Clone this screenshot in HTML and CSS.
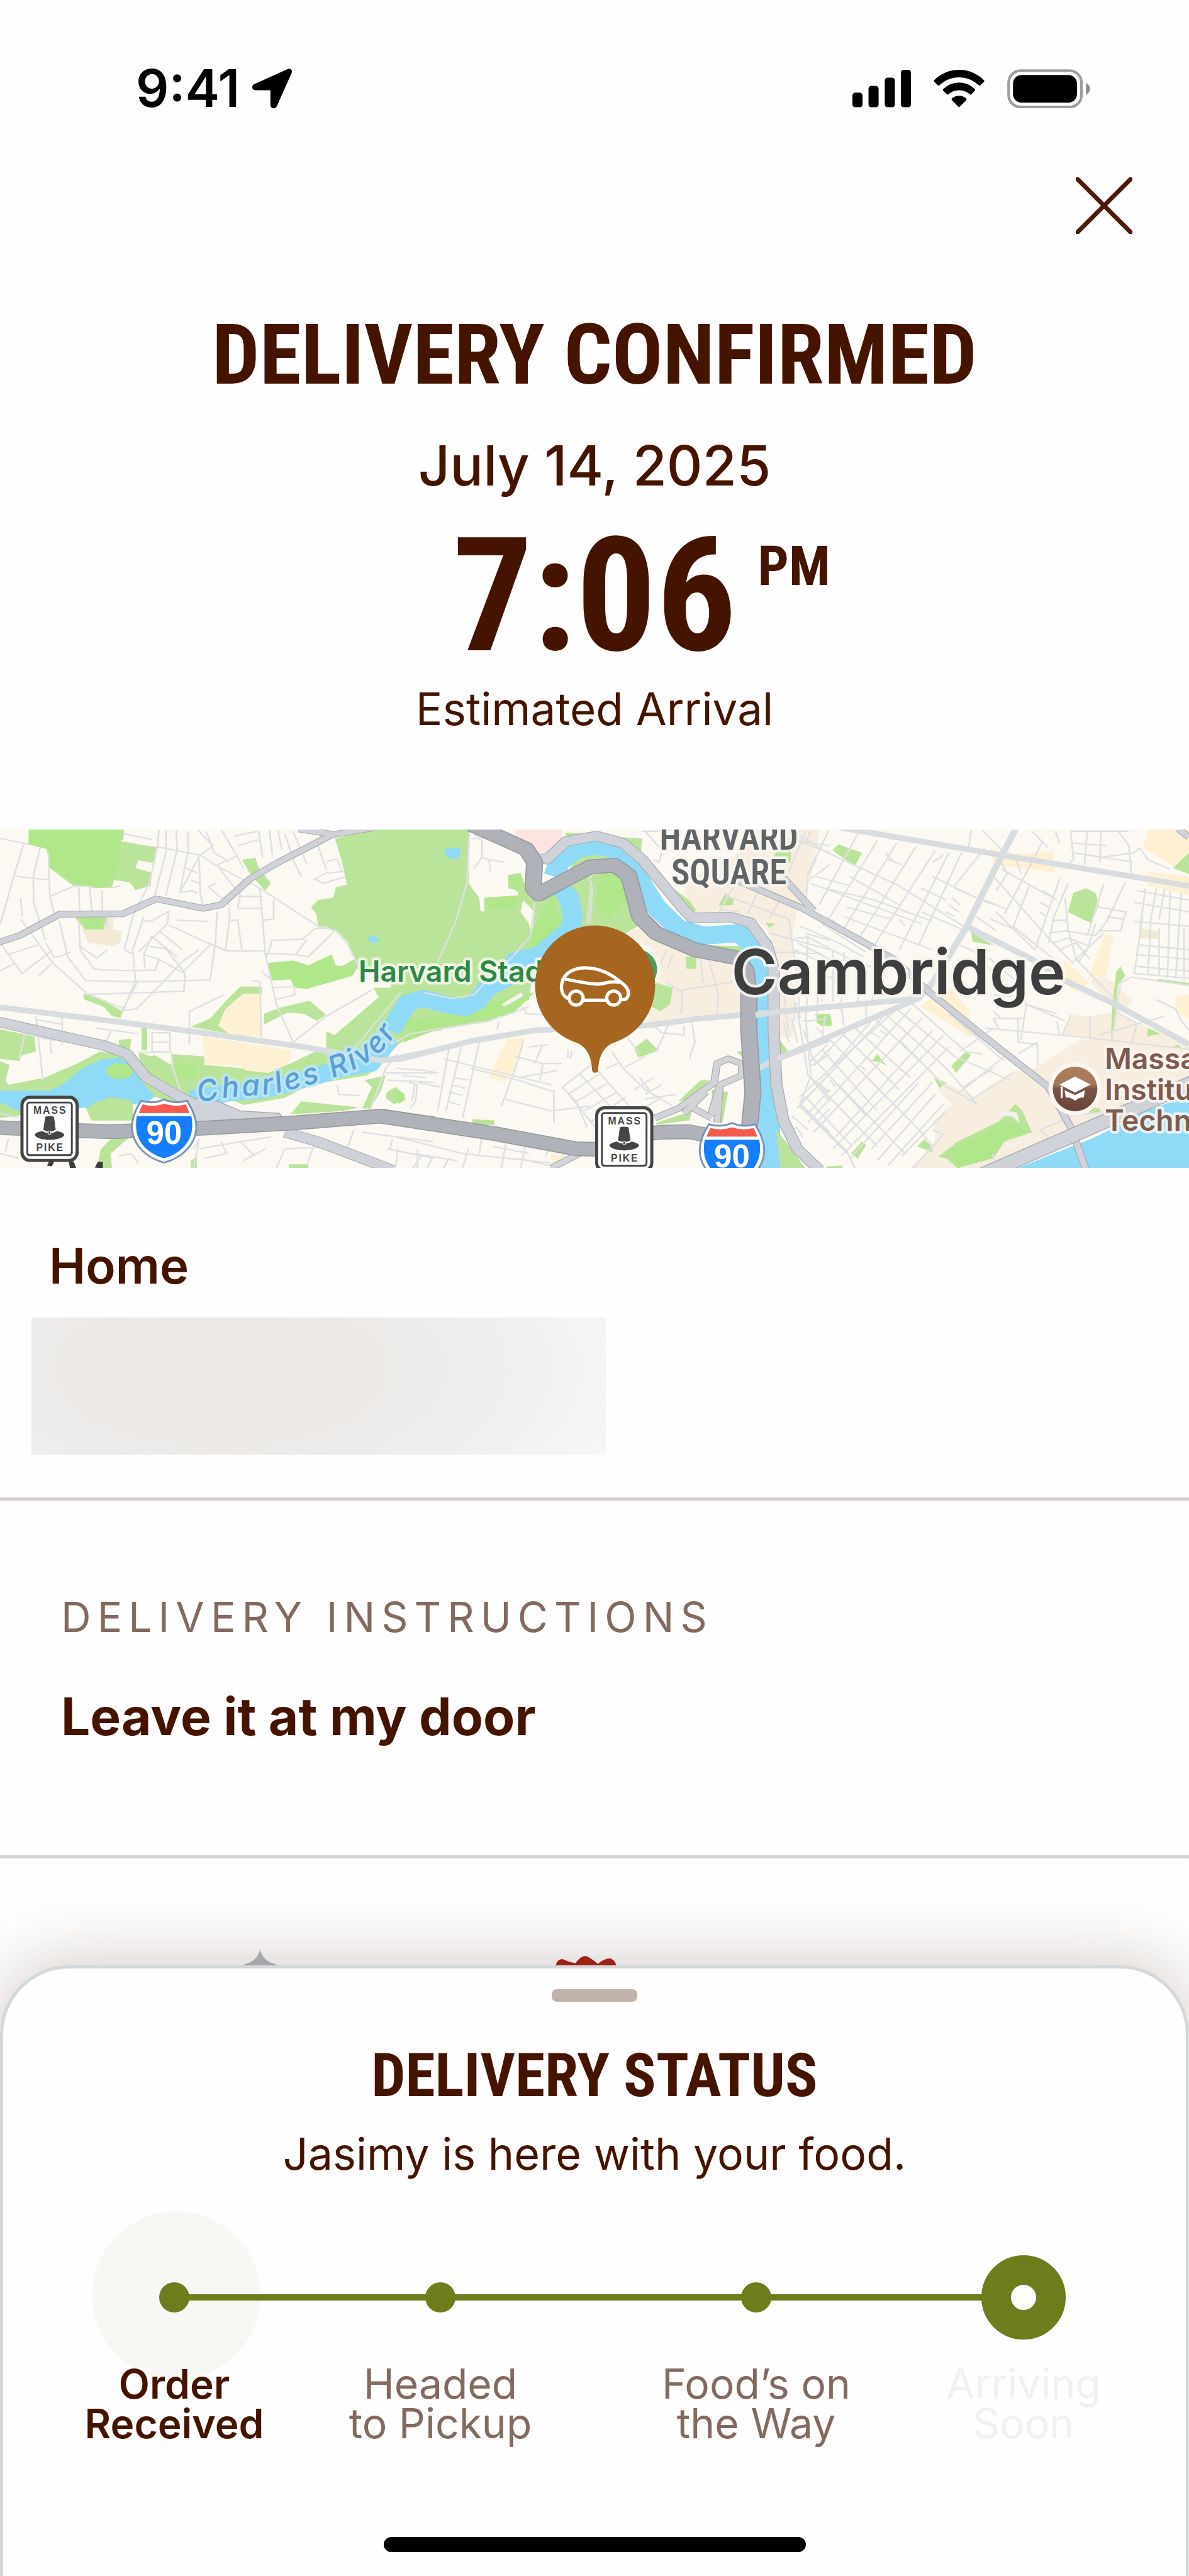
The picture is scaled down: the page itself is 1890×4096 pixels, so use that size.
FILE: index.html
```html
<!DOCTYPE html>
<html lang="en">
<head>
<meta charset="utf-8">
<meta name="viewport" content="width=device-width, initial-scale=1">
<title>Delivery Confirmed</title>
<link rel="stylesheet" href="styles.css">
</head>
<body>
<div class="screen">
  <header class="status-bar">
    <div class="clock">
      <span>9:41</span>
      <svg class="icon-location" viewBox="0 0 190 192" aria-hidden="true"><path d="M170 2C182-3 194 8 189 20L118 180C112 195 87 194 87 176V104H14C-4 104-4 81 10 75Z"/></svg>
    </div>
    <div class="indicators">
      <svg class="icon-signal" viewBox="0 0 284 182" aria-hidden="true"><rect y="111" width="49" height="71" rx="14"/><rect x="78" y="78" width="49" height="104" rx="14"/><rect x="157" y="38" width="49" height="144" rx="14"/><rect x="235" width="49" height="182" rx="14"/></svg>
      <svg class="icon-wifi" viewBox="0 0 246 182" aria-hidden="true"><path d="M3 50C70-17 176-17 243 50Q247 54 243 58L225 75Q221 78 217 74C163 24 83 24 29 74Q25 78 21 75L3 58Q-1 54 3 50Z"/><path d="M47 93C90 51 156 51 199 93Q203 97 199 101L183 118Q179 122 174 118C145 92 101 92 72 118Q67 122 63 118L47 101Q43 97 47 93Z"/><path d="M90 137C108 121 138 121 156 137Q162 142 157 147L127 178Q123 182 119 178L89 147Q84 142 90 137Z"/></svg>
      <svg class="icon-battery" viewBox="0 0 401 190" aria-hidden="true"><rect x="7" y="7" width="352" height="176" rx="58" fill="none" stroke="#9a9ea1" stroke-width="13"/><rect x="28" y="28" width="309" height="134" rx="42"/><path d="M380 66Q401 78 401 95T380 124Z" fill="#8c8f91"/></svg>
    </div>
  </header>

  <main>
    <section class="summary">
      <button class="close" type="button" aria-label="Close">
        <svg viewBox="0 0 90 90" aria-hidden="true"><path d="M3 3L87 87M87 3L3 87"/></svg>
      </button>
      <h1>DELIVERY CONFIRMED</h1>
      <p class="date">July 14, 2025</p>
      <p class="time">7:06<span class="period">PM</span></p>
      <p class="caption">Estimated Arrival</p>
    </section>

    <svg class="map" viewBox="0 1340 1920 547" role="img" aria-label="Map of the delivery area">
      <defs>
        <g id="pike">
          <rect width="94" height="107" rx="15" fill="#454545"/>
          <rect x="5" y="5" width="84" height="97" rx="11" fill="#fff"/>
          <rect x="11" y="11" width="72" height="85" rx="4" fill="none" stroke="#454545" stroke-width="3"/>
          <path d="M40 34Q47 32 54 34L57 55Q47 61 37 55Z" fill="#454545"/>
          <path d="M23 63C25 59 31 58 35 57Q47 64 59 57C63 58 69 59 71 63C68 74 26 74 23 63Z" fill="#454545"/>
          <rect x="45" y="57" width="4" height="5" fill="#454545" stroke="#fff"/>
          <text class="sign" x="48" y="29">MASS</text>
          <text class="sign" x="48" y="89">PIKE</text>
        </g>
        <g id="interstate">
          <path d="M16 3Q35 9 53 1Q71 9 90 3Q106 28 105 48C103 76 80 96 53 103C26 96 3 76 1 48Q0 28 16 3Z" fill="#fff" stroke="#7a93b8" stroke-width="3"/>
          <path d="M18 9Q36 14 53 8Q70 14 88 9L94 23H12Z" fill="#f6594e"/>
          <path d="M9 28H97Q99 38 98 49C96 72 76 90 53 96C30 90 10 72 8 49Q7 38 9 28Z" fill="#147efb"/>
          <text class="route" x="53" y="73">90</text>
        </g>
        <linearGradient id="campus" x1="0" y1="0" x2="0" y2="1"><stop offset="0" stop-color="#ad7f5d"/><stop offset=".4" stop-color="#a4775b"/><stop offset=".5" stop-color="#7a5446"/><stop offset="1" stop-color="#6a4338"/></linearGradient>
      </defs>
      <rect y="1340" width="1920" height="547" fill="#fbf9f2"/>

      <!-- Western tile: land cover and water -->
      <g transform="translate(0 1320) scale(.44643 .38265)">
        <path class="park" d="M104 52H450L446 96 428 100 570 128 560 195 500 182 490 215 550 235 545 290 490 308 470 275 412 265 405 298 340 300 265 290 180 215 170 135 104 115ZM875 180L925 172 932 205 980 280 958 310 905 240ZM275 420H385V475H310L275 430ZM1212 92L1345 52H1450V640H1300L1220 640 1280 600 1260 530 1215 475 1150 460 1145 410 1125 380 1150 350 1205 340 1215 295 1255 285 1235 180ZM300 745L360 765 445 820 435 848 405 840 375 800 305 770ZM0 895L125 925 130 990 80 1005 70 1030 0 1020Z"/>
        <path class="park" d="M690 885L760 850 830 760 870 715H948V745H880L815 810 790 880 830 915 880 895V925ZM955 830L1010 805 1120 775 1180 835 1145 860 1100 830 1040 825 955 875ZM430 940L475 935 470 985 430 965ZM512 885H532V985H512ZM500 990L545 1010 560 1005 620 1045V1000L740 1010V1045L870 1060 970 1080 1050 1040 1140 990 1180 1000V905L1210 920 1330 800 1370 760 1350 720 1600 720V900L1500 915 1440 960 1380 1040 1330 1090 1120 1130 1030 1185 880 1215 830 1190 700 1240 560 1180 520 1110ZM0 1030L35 1045 20 1110 30 1130 160 1100 280 1040 360 990 420 1000 480 1040 560 1180 480 1200 480 1280 330 1280 310 1225 0 1270ZM400 1360L480 1340 440 1380 400 1420 405 1482H350L365 1400ZM1320 1110L1395 1090 1380 1150 1340 1230H1310L1345 1140ZM1090 1200L1300 1225 1240 1240 1050 1255ZM1400 1160L1430 1140 1465 1170 1455 1200 1425 1212 1395 1185ZM1045 1465H1115V1482H1045ZM690 1450L712 1435V1482H690Z"/>
        <path class="grass" d="M104 52H430L440 120 420 240 380 298 280 285 180 210 170 130 104 115ZM300 425H370V470H310ZM970 615L1060 605 1115 625 1200 580 1215 625 1290 640 1275 670 1110 725 1065 720 1050 685 985 690ZM640 1040L710 1045V1100L640 1105ZM1460 880L1600 790V890L1460 950Z"/>
        <path class="shops" d="M880 745H948V930L830 915 790 880 815 810ZM733 925L1055 985 1045 1040 970 1080 890 1070 870 1050 740 1040Z"/>
        <path class="sand" d="M288 450L310 475H375L385 425H410V475L440 480 435 530 405 545 320 530Z"/>
        <path class="water" d="M0 1155H175L220 1135 300 1060 370 1022 430 1015 470 1040 510 1110 560 1180 520 1215 350 1200 320 1225 70 1240 0 1205ZM1332 505H1362V515H1380L1350 533 1332 522Z"/>
        <path class="park" d="M330 1215L400 1180 480 1200 470 1280 330 1280Z"/>
        <ellipse class="grass" cx="432" cy="1072" rx="48" ry="34"/>
        <path class="river" d="M690 1190L820 1165 960 1150 1120 1100 1240 1060 1340 1040 1400 950 1440 860 1470 800 1510 770 1580 765"/>
      </g>

      <!-- Central tile -->
      <g transform="translate(640 1320) scale(.44643 .38265)">
        <path class="park" d="M0 52H265L262 280 300 340 305 398 318 398 318 340 440 330 460 340 450 400 480 450 490 500 500 600 480 770 340 860 60 915 -20 950V700ZM405 245L450 235 470 300 620 290 640 150 760 130 830 200 870 350 890 450 830 490 480 590 500 400 440 330 440 310 405 300ZM610 65L700 70 620 100ZM810 85L890 90 885 145ZM910 240L1000 300 1095 380 1080 400 1020 390ZM1160 360L1190 322 1222 345 1215 372ZM1340 445L1370 450 1350 468ZM1100 540L1250 545V580ZM1365 150H1430V195L1395 180ZM1045 590L1085 580 1090 640 1045 640ZM1010 640L1035 650 1020 710ZM930 700L1000 720 990 790 950 820 910 810ZM1060 725L1145 735V745H1060ZM860 975L905 935 950 985 875 1015ZM1520 835H1568V885L1520 870ZM275 1275L355 1280V1300L275 1295ZM1020 1200L1100 1110 1135 1110 1100 1150 1060 1190ZM940 1290L1070 1240 1060 1280 940 1298ZM1140 1150L1200 1160 1180 1290H1150ZM1230 990L1260 985V1020ZM1370 1320L1400 1370 1450 1440 1460 1482H1388ZM1385 940L1415 990 1385 1010Z"/>
        <path class="grass" d="M0 860L250 830 340 780 500 740 420 830 60 910ZM320 340L440 335 430 385 340 390ZM405 245L450 240V325L420 300ZM560 340L600 450 540 530 480 580 490 480ZM740 240L830 240 850 330 770 430 720 380ZM0 1140L35 1190 10 1210 0 1200Z"/>
        <path class="campus-land" d="M1070 250L1230 160 1250 52H1530L1500 260 1450 400 1430 520 1435 930 1385 930 1375 600 1340 470 1270 410 1090 400 1040 320ZM830 490L890 460 1100 560 1240 590 1255 830 900 880 940 700 930 560ZM890 360L930 420 920 450Z"/>
        <path class="park" d="M1190 322L1222 345 1215 372 1165 372ZM1395 100L1430 120 1425 195 1365 165ZM910 790L940 700 1000 720 990 790 955 820ZM1045 590L1085 590V640H1050ZM1335 445L1370 450 1350 468Z"/>
        <path class="clinic" d="M430 52H598V100L540 150 500 145 430 90Z"/>
        <path class="shops" d="M400 935L465 930 420 1080 395 1115 335 1100ZM555 1420L610 1430 570 1482Z"/>
        <path class="field" d="M380 790L450 740 460 755 390 800Z"/>
        <path class="water" d="M170 140L185 132H230V160L215 180 185 170Z"/>
        <path class="river" d="M-20 900L5 850 40 785 100 765 180 790 250 805 290 780 330 720 400 680 430 605 520 580 580 520 630 470 638 420 625 340 590 290"/>
        <path class="river wide" d="M570 250L590 190 650 135 720 120 790 135 850 190 890 290 940 380 1020 470 1110 500 1240 490 1280 530 1300 620 1318 760 1322 900 1340 1060 1350 1250 1350 1500"/>
        <path class="water" d="M1310 1250L1370 1290 1380 1400 1395 1490H1310Z"/>
      </g>

      <!-- Eastern tile -->
      <g transform="translate(1220 1320) scale(.44643 .38265)">
        <path class="campus-land" d="M640 1482L560 1482 650 1370 645 1280 710 1215 660 1150 690 1120 790 1180 920 1080 1010 1060 1180 935 1290 940 1568 960V1140L1290 1270 830 1482ZM1140 835L1210 840 1300 820 1568 970 1420 960 1110 920ZM1210 690L1260 670 1320 720 1365 780 1310 830Z"/>
        <path class="shops" d="M850 125L900 155 1020 150 1075 140 1085 235 860 200ZM1425 52H1568V150L1520 210 1400 130ZM1420 230L1568 250V330L1420 290ZM1265 495L1295 500 1270 670 1200 680ZM1115 600L1210 700 1150 740 1120 690ZM600 790L700 720 770 810 780 930 600 800ZM1520 755L1568 750V850L1520 820Z"/>
        <path class="sand" d="M1395 470L1455 480V515L1388 510Z"/>
        <path class="park" d="M278 140L300 115 385 150 360 205 320 175ZM1130 400L1150 320 1195 300 1230 320 1242 370 1215 445 1190 435ZM780 485L850 530V540L785 525ZM1305 650L1320 630 1338 670 1310 710 1300 850 1285 940 1290 800ZM215 830H270L278 880H235ZM88 940L120 990 88 1005ZM420 1030L440 1000 475 1050 450 1035ZM708 1050L760 990 780 1005 725 1080ZM645 1100L690 1120 665 1145ZM345 1420L385 1370 400 1385 370 1442ZM585 1390L610 1360 640 1395V1415ZM660 1435L730 1370 880 1285 940 1210 965 1240 1000 1330 900 1370 860 1440 730 1482 690 1440ZM1420 890L1465 915 1415 925ZM1505 970L1530 960 1540 975ZM1210 1225L1245 1230V1248H1205ZM255 1475L315 1470V1482H255ZM1455 683L1568 700V712L1455 695ZM1510 215L1568 150V240ZM75 1320L110 1370 180 1482H90Z"/>
        <path class="grass" d="M220 840H270V880H235ZM705 1400L800 1350 900 1280 990 1330 900 1365 860 1440 730 1478Z"/>
        <path class="field" d="M870 1275L900 1240 945 1245 955 1290 930 1265 905 1260ZM905 1385L1010 1345 920 1395Z"/>
        <path class="water" d="M930 1490L1240 1345 1400 1245 1568 1175V1490Z"/>
      </g>

      <!-- Streets -->
      <g class="streets" transform="translate(0 1320) scale(.44643 .38265)">
        <path d="M0 90L105 115M85 115L50 250 0 455M55 250L175 265M145 130L120 250 122 360 165 520M175 150L180 330 200 430M180 335L270 290 340 295M285 290L288 400M325 300L332 405M370 310V405M400 300L435 290M445 70L550 95M575 55L570 120 540 280 480 420 450 560M565 125L725 160 775 200 940 300M600 55L600 150 560 330M638 55L640 140 600 330M680 60L680 145 650 320M715 55L770 120 720 165 650 320M745 60L775 150 830 190M800 52L860 170 880 215M850 80L930 60M860 120L935 95M935 55L950 170M975 55L985 160M1005 55L1020 140M1030 70L1065 190 1090 250M1060 60L1110 200M1150 120L1180 220M1180 190L1220 175 1235 230M1135 265L1180 235 1245 230M1140 260L1170 280 1250 250M855 165L780 205M720 175L725 330 735 370M670 215L715 235M690 265L720 280M780 280L755 295 830 370M790 210L870 330 860 380M860 335H950M860 385H950M940 300L960 580 1000 790 1060 950M940 300L1150 460 1215 480 1260 540 1300 640M990 345V430L950 435M830 435H860L875 560M830 380V430L815 565M610 455L750 530 820 565H955M785 400L780 520 760 690M610 400L605 450 500 570M510 435L545 440 615 395M640 435L750 440M650 320L690 310 715 320M575 480L660 560M545 500L640 590M540 545L600 555 670 660M520 580L575 600 665 660M760 540L660 655M550 500L520 580 525 640M575 600L560 650M520 420L480 560 490 690 445 820M450 560L485 580M390 420L385 470M285 440L290 560 340 640 370 645 480 648 560 645M290 545L350 595 390 560M215 440L245 590 310 690 490 695 760 688M190 590L215 590 255 570M165 530L195 590M0 530L80 660 190 560M80 420L75 340M75 430L190 615 315 745 460 815 495 808 595 690 660 610 720 560M320 748L480 742 665 735 670 660M30 580L135 540M0 650L55 615M140 670L185 620M500 690L440 820M965 590L985 520 1095 515 1140 470 1190 465M960 575L1070 580 1115 590 1210 480M1070 580L1110 515M985 720L1065 715 1065 750 1000 770M945 650L985 690M810 750L685 820V960M940 700L945 930M1345 730L1180 840 1060 950M1450 740L1275 985M910 690L940 695"/>
        <path d="M130 840L155 1110M135 855L225 875M180 900L185 1000M225 840L225 960M135 930L220 945M345 890L500 915M400 905L380 960M550 910H615V990H550ZM550 950H615M500 995L615 990M90 910L70 1020M620 990L625 1060 660 1180M700 1400L720 1360 700 1482M720 1400L870 1370 980 1350M800 1370L820 1420 740 1440M870 1370L920 1430M880 1450L960 1400M1030 1400L1000 1482M1140 1370L1110 1470M1310 1330L1568 1370M1280 1320L1250 1420M1420 1360L1410 1400M1400 1110L1568 1120M1395 1080H1568M1220 1130L1225 1170 1300 1175M1500 1130L1490 1200M1440 1000L1395 1060 1340 1230M430 1430L475 1420 500 1460M600 1440L620 1400M0 1420L70 1440M30 1360L20 1410M0 1250L70 1270M1030 1400L1240 1390 1250 1430M1400 1400L1568 1440M1510 1400V1482M1440 1400L1430 1482"/>
      </g>
      <g class="streets" transform="translate(640 1320) scale(.44643 .38265)">
        <path d="M265 60L255 280 215 440 150 610M500 360L485 500 420 590 320 700 280 750 200 765 100 740M705 270L690 450M695 270L710 240M710 290L700 450M270 90H350L380 60M280 70L310 100V170L280 220M310 170L335 180 340 230M340 180L390 190M480 800L340 860 50 915 -20 960M370 860L365 900M460 800L470 830 540 835M0 1060L110 1070 150 1080M20 1090L110 1100M80 1120L160 1140M45 1120L75 1130 70 1200 50 1230M190 980L150 1240M235 970L180 1240M300 950L240 1270M170 1020L560 1130M270 1060L440 1110 570 1160M210 1100L260 1110M200 1130L250 1145M190 1160L240 1175M185 1200L230 1215M460 940L440 1030 380 1220M430 1010L530 1040 600 1040M530 960L500 1040M480 970L550 960M620 980V1020M635 985L630 1020M440 1100L580 1070M530 1040L520 1110M390 1190L560 1240 700 1220M570 1150V1290M700 1050L600 1140 650 1200 690 1310M740 1080L620 1170M770 1120L650 1200M800 1160L680 1240M830 1180L700 1290M660 1080L790 1240M720 1060L850 1230M610 1150L720 1310M780 990L820 1060 900 1150 1000 1220M820 1060L900 1010M760 1060L800 1040M830 920L880 1000M880 1100L920 1160M900 1170L960 1130M860 1150L930 1100M900 1190L1010 1170M850 1260L950 1190M990 860L940 990M1070 870L1080 950 1060 1020M920 870L960 910 1040 920V880M1160 830L1165 750 1130 600M1030 830L1035 740 980 700M1030 730L1250 690M980 560L930 680M1100 600L1110 700M980 640L1000 580M870 1220L920 1290"/>
        <path d="M0 1350L240 1420 560 1460M90 1430L60 1482M60 1420L220 1450M130 1440L110 1482M190 1440L170 1482M260 1400L240 1482M310 1340L300 1420M400 1350L380 1482M350 1390L480 1420M470 1370L450 1482M440 1440L550 1470M560 1370L540 1430M620 1400L600 1430M900 60L960 140M890 60L960 60 1000 52M930 180L950 190 960 150M1480 60L1420 230M1568 120L1340 80M1568 200L1500 260M1350 60L1568 150M1500 52L1480 110M1240 260L1200 330 1160 420M1310 310L1270 410M1390 340L1350 430M1190 330L1420 430M1170 390L1240 400M1350 490L1568 560M1370 570H1450M1420 430L1450 680 1460 850M1480 490L1568 520M1450 530L1568 600M1440 560L1568 630M1480 840L1500 1100 1568 1200M1430 850L1450 950M1400 860L1420 950M1550 840L1540 940M1500 1090L1460 1210 1568 1330M1500 1050L1568 1000M1480 1190L1568 1080M1520 1120L1568 1160M1490 1250L1568 1150M1520 1290L1568 1230M1440 720L1440 860M1490 700L1480 860M1530 680L1520 850"/>
      </g>
      <g class="streets" transform="translate(1220 1320) scale(.44643 .38265)">
        <path d="M150 70L260 150 520 290 860 540M200 280L600 450M220 250L340 290M190 240L220 180M265 55L190 240 180 390M375 60L230 370M440 100L270 420M510 110L320 470M580 125L370 520M650 140L430 540M700 150L520 560M745 150L590 540M250 300L430 350 640 440M340 250L520 370M480 180L530 200M470 150L500 190M600 300L690 350M640 190L680 160M640 250L780 330 860 370M720 300L800 340M710 340L740 370M700 370L735 400M690 400L720 420M330 380L490 430M320 420L640 560M520 430L540 460M600 400L760 480M260 420L420 560M240 450L400 570M160 460L300 530 390 590M180 500L340 600 440 640M140 510H190L180 760M150 575H240M160 620L180 640M280 560V780M230 640L240 780M320 570L310 780M260 670L290 690M380 640L370 780M440 680L420 780M100 720L120 910M145 780L165 910 190 1090 260 1160M175 900L210 1030M170 860H200L260 850M310 800L320 880M400 780V850"/>
        <path d="M780 55L770 140M820 55L900 150M830 130L720 290M880 170L910 240 870 310M940 170L960 240M1040 100L900 410M1000 60L1060 130M1085 60L1100 110M1140 60L1150 180 1120 210M1200 60L1190 200M1250 60L1245 190M1310 55L1350 120 1360 240M1150 110L1270 120M1140 60L1350 60M1150 150L1365 190M1250 170L1370 150 1390 130M1390 130L1420 180 1500 220M860 250L960 380 1060 510 1150 620M890 220L1090 350M990 290L930 470M1040 310L1080 340M1030 360L1060 380M1030 400L1050 420M1100 260L1010 560M1130 280L1080 420 1060 530M1120 340L1130 470 1160 600 1300 770M1070 435H1130M1060 490L1120 480 1230 500M1080 530L1130 510 1200 540M1100 560L1160 530 1210 600M1230 450L1200 560 1170 610M1260 490L1150 610M1260 280L1200 500M1340 270L1270 440 1230 500M1240 380L1340 400 1320 480 1240 480M1270 420L1330 430M1370 360L1568 400M1370 440L1568 460M1400 420L1370 660 1568 680M1410 300L1390 480M1450 300L1430 430M1480 300L1460 430M1500 310L1490 680M1540 320L1520 680M1390 540L1568 560M1380 580L1568 600M1375 630L1568 650M1380 310L1568 350M1430 430L1420 660M1460 470V670M1550 470V690M1320 700L1360 675 1568 710M1320 700L1290 940M930 460L1080 600M870 400L1010 560M850 430L930 470M800 420L870 480M830 350L910 390M740 540L850 600 950 700 980 790 960 940M760 600L850 640M860 750L970 760 960 780 1120 860M860 850H970M830 890L1190 930 1568 980M860 850L880 890M860 820L890 850M950 850V950L1020 960V1050M950 1000L1020 950M1090 860L1100 920M1140 835L1110 920M1210 840V930M1450 770L1520 810 1540 860 1568 900M1240 920L1480 840M1300 820L1380 870 1360 960M980 790L1090 830"/>
        <path d="M560 780L760 990 820 1000M500 800L720 1010 920 1110M460 820L690 1060 800 1210M430 850L640 1080M350 880L560 1100M310 910L520 1150M270 940L480 1190M240 980L440 1240M210 1020L400 1260M180 1180L160 1210 330 1410 360 1482M240 1150L440 1390M160 1220L350 1440M180 1180L350 1390M300 1130L540 1420M380 1070L600 1330 640 1390M200 1030L260 960M210 1050L350 880M250 1090L420 860M150 1230L480 820M160 1180L520 800M190 1290L560 810M210 1330L600 850M290 1350L640 900M280 1400L680 920M310 1430L700 970M350 1430L590 1120M420 1400L640 1120M440 1450L650 1170M480 1470L680 1210M530 1430L690 1240M730 1170L900 1010M750 1140L860 1060M770 1200L930 1080M520 940L680 1130 800 1210M700 830L900 1030M740 990L860 890M110 1330L150 1310 170 1350M130 1260L190 1320M640 1320L680 1340 570 1482M1030 1320L1060 1350M1030 1320L1150 1260 1290 1240M860 1420V1450M220 890L240 910M420 910L450 930M400 1010L420 1030M380 1050L400 1070M270 1110L290 1140M450 900L480 920"/>
      </g>

      <!-- Avenues and highways -->
      <g class="roads">
        <g transform="translate(0 1320) scale(.44643 .38265)">
          <path class="avenue" d="M0 803L400 860 700 905 1100 970 1380 1028 1450 1015 1568 985"/>
          <path class="edge s24" d="M-10 530L70 500 215 410 445 408 565 345 735 385 800 370 905 260 1000 195 1200 75 1350 45M1080 50L1200 72"/><path class="light s24" d="M-10 530L70 500 215 410 445 408 565 345 735 385 800 370 905 260 1000 195 1200 75 1350 45M1080 50L1200 72"/>
          <path class="edge s38" d="M-20 860L130 900 380 965 460 1000 530 1100 650 1180 750 1240M1030 1330L1150 1370 1420 1490"/>
          <path d="M660 1180L790 1200 870 1240 1010 1250 1030 1280 700 1310Z" fill="#cfd2d9" stroke="#aaadb2" stroke-width="4"/>
          <path class="light s38" d="M-20 860L130 900 380 965 460 1000 530 1100 650 1180 750 1240M1030 1330L1150 1370 1420 1490"/>
          <path class="edge dark s52" d="M-20 1310L400 1328 750 1312 1050 1292 1380 1262 1568 1295"/><path class="main s52" d="M-20 1310L400 1328 750 1312 1050 1292 1380 1262 1568 1295"/>
        </g>
        <g transform="translate(640 1320) scale(.44643 .38265)">
          <path class="avenue" d="M-50 1025L20 1020 270 945 500 900 900 880 1100 850 1300 830 1568 800M1310 1060L1370 1025 1568 935"/>
          <path class="edge s24" d="M935 1270L1020 1230 1150 1120 1160 1040 1200 1020 1250 1040 1250 1090 1170 1130 1140 1250M1060 1220L1140 1270M1170 1140L1160 1290M1040 1250L1120 1160M560 1482L670 1415"/>
          <path class="loop s24" d="M935 1270L1020 1230 1150 1120 1160 1040 1200 1020 1250 1040 1250 1090 1170 1130 1140 1250M1060 1220L1140 1270M1170 1140L1160 1290M1040 1250L1120 1160M560 1482L670 1415"/>
          <path class="edge s38" d="M500 172L545 178 615 102 725 80 820 110 890 180 1040 390 1070 425 1210 422 1280 445 1340 540 1365 640 1365 900 1375 1130 1400 1280 1450 1400 1530 1490"/><path class="light s38" d="M500 172L545 178 615 102 725 80 820 110 890 180 1040 390 1070 425 1210 422 1280 445 1340 540 1365 640 1365 900 1375 1130 1400 1280 1450 1400 1530 1490"/>
          <path class="edge dark s52" d="M270 30L470 135 500 190 495 300 515 325 700 210 790 203 840 245 860 330 880 420 940 490 1080 560 1235 595 1265 650 1275 750 1275 900 1290 1160 1275 1340"/><path class="main s52" d="M270 30L470 135 500 190 495 300 515 325 700 210 790 203 840 245 860 330 880 420 940 490 1080 560 1235 595 1265 650 1275 750 1275 900 1290 1160 1275 1340"/>
          <path class="edge dark s52" d="M-60 1262L0 1272 350 1335 650 1400 800 1405M880 1340L960 1330 1060 1328 1160 1350"/><path class="main s52" d="M-60 1262L0 1272 350 1335 650 1400 800 1405M880 1340L960 1330 1060 1328 1160 1350"/>
        </g>
        <g transform="translate(1220 1320) scale(.44643 .38265)">
          <path class="avenue" d="M310 45L890 160 1568 290M940 52L870 210 760 470 640 700M770 465L1000 600 1120 690 1300 790 1568 960M0 835L80 822 590 765 640 700M80 1020L400 860 590 765"/>
          <path class="edge s24" d="M-60 270L170 385 410 540 500 600 630 740 820 920 1060 1140 1145 1320 1195 1490M100 255L210 395M1530 50L1568 85"/><path class="light s24" d="M-60 270L170 385 410 540 500 600 630 740 820 920 1060 1140 1145 1320 1195 1490M100 255L210 395M1530 50L1568 85"/>
          <path class="edge s52" d="M820 1510L1145 1345 1290 1270 1600 1110"/><path class="light s52" d="M820 1510L1145 1345 1290 1270 1600 1110"/>
        </g>
      </g>

      <!-- Place names -->
      <g class="labels">
        <text class="district" x="1177" y="1372">HARVARD</text>
        <text class="district" x="1177" y="1428">SQUARE</text>
        <text class="stadium" x="579" y="1586">Harvard Stadium</text>
        <text class="city" x="1181" y="1606">Cambridge</text>
        <path id="river-line" d="M322 1783C360 1768 420 1772 450 1765S560 1738 590 1718S625 1690 650 1655" fill="none"/>
        <text class="river-name"><textPath href="#river-line">Charles River</textPath></text>
        <text class="school" x="1784" y="1727">Massachusetts</text>
        <text class="school" x="1784" y="1777">Institute of</text>
        <text class="school" x="1784" y="1827">Technology</text>
      </g>
      <circle cx="1736" cy="1759" r="43" fill="#fbf7f0"/>
      <circle cx="1736" cy="1759" r="36" fill="url(#campus)"/>
      <path d="M1711 1752L1736 1739 1761 1752 1736 1765ZM1719 1761L1736 1769 1752 1761 1750 1773Q1744 1772 1736 1778Q1728 1772 1721 1773ZM1713 1754L1716 1756V1774H1713Z" fill="#fff"/>
      <circle cx="1029" cy="1566" r="35" fill="#4a9e5c" stroke="#f6f4ec" stroke-width="6"/>
      <use href="#pike" x="33" y="1770"/>
      <use href="#interstate" x="212" y="1775"/>
      <use href="#pike" x="961" y="1787"/>
      <use href="#interstate" x="1129" y="1813"/>
      <path d="M76 1883L80 1874 88 1874 84 1884ZM111 1876H119L123 1887H113ZM153 1886L158 1877H166V1887Z" fill="#3c3c3c"/>

      <g fill="#a6661f">
        <circle cx="961" cy="1592" r="97"/>
        <path d="M925 1682C946 1688 955 1704 956 1728A5 5 0 0 0 966 1728C967 1704 976 1688 997 1682Z"/>
      </g>
      <g transform="translate(850 1480) scale(.33333)" fill="none" stroke="#fff" stroke-width="16" stroke-linecap="round">
        <path d="M200 398C172 384 166 352 172 325C182 272 232 251 285 250C360 250 418 284 468 328C490 346 498 366 493 384C488 402 476 405 466 404M278 407H385M182 303C240 315 300 329 345 329C390 329 400 310 446 320"/>
        <circle cx="241" cy="397" r="34"/><circle cx="423" cy="397" r="34"/>
      </g>
    </svg>

    <section class="address">
      <h2>Home</h2>
      <div class="redacted"></div>
    </section>

    <section class="instructions">
      <h2>DELIVERY INSTRUCTIONS</h2>
      <p>Leave it at my door</p>
    </section>

    <section class="items" aria-hidden="true">
      <svg class="item-star" viewBox="0 0 52 27"><path d="M0 27V25Q22 20 26 0Q30 20 52 25V27Z" fill="#b3b9c0"/></svg>
      <svg class="item-bag" viewBox="0 0 98 16"><path d="M0 16Q3 5 11 5Q22 10 32 12Q40 0 49 0Q58 4 68 13Q78 4 88 4Q96 7 98 16Z" fill="#a82317"/></svg>
    </section>
  </main>

  <section class="sheet">
    <div class="handle"></div>
    <h2>DELIVERY STATUS</h2>
    <p class="message">Jasimy is here with your food.</p>
    <ol class="steps">
      <li class="step active"><span class="dot"></span><span class="label">Order<br>Received</span></li>
      <li class="step"><span class="dot"></span><span class="label">Headed<br>to Pickup</span></li>
      <li class="step"><span class="dot"></span><span class="label">Food’s on<br>the Way</span></li>
      <li class="step last"><span class="dot"></span><span class="label">Arriving<br>Soon</span></li>
    </ol>
    <div class="home-indicator"></div>
  </section>
</div>
</body>
</html>
```
FILE: styles.css
```css
:root {
  --brown: #451400;
  --muted: #836a5f;
  --green: #6e7c1b;
}

* { box-sizing: border-box; }

body {
  margin: 0;
  background: #fefefe;
  color: var(--brown);
  font-family: Inter, "Liberation Sans", sans-serif;
}

h1, h2, p, ol { margin: 0; padding: 0; }

.screen {
  display: flex;
  flex-direction: column;
  min-height: 100vh;
  overflow: hidden;
}

.status-bar {
  display: flex;
  justify-content: space-between;
  align-items: center;
  padding: 92px 157px 0 216px;
  color: #000;
}

.clock {
  display: flex;
  align-items: center;
  gap: 20px;
  font-size: 82px;
  font-weight: 600;
  line-height: 98px;
}

.indicators { display: flex; align-items: center; gap: 36px; }
.icon-location { width: 63px; }
.icon-signal { width: 93px; }
.icon-wifi { width: 81px; }
.icon-battery { width: 132px; }

.summary {
  display: flex;
  flex-direction: column;
  align-items: center;
  padding: 92px 90px 150px;
  text-align: center;
}

.close {
  align-self: flex-end;
  width: 90px;
  height: 90px;
  padding: 0;
  border: 0;
  background: none;
}

.close svg {
  display: block;
  width: 100%;
  fill: none;
  stroke: #4a1a0b;
  stroke-width: 7;
  stroke-linecap: round;
}

h1, .time, .sheet h2 {
  font-family: "Roboto Condensed", Roboto, sans-serif;
  font-weight: 700;
}

h1 { margin-top: 113px; font-size: 134px; line-height: 160px; }

.date { margin-top: 43px; font-size: 88px; font-weight: 500; line-height: 104px; }

.time { position: relative; margin-top: 36px; font-size: 252px; line-height: 240px; }

/* The period hangs off the digits, which alone are centred. */
.period {
  position: absolute;
  top: 30px;
  left: 100%;
  margin-left: 34px;
  font-size: 87px;
  line-height: 84px;
}

.caption { margin-top: 17px; font-size: 71px; line-height: 84px; }

.map { display: block; width: 100%; overflow: hidden; }
.park { fill: #bbe49b; }
.grass { fill: #b0e78a; }
.water { fill: #8fdaf7; }
.shops { fill: #fef1d3; }
.sand { fill: #f3ead3; }
.campus-land { fill: #f8eee0; }
.clinic { fill: #fde4e1; }
.field { fill: #f3f2ee; }
.river { fill: none; stroke: #8fdaf7; stroke-width: 72; stroke-linejoin: round; }
.river.wide { stroke-width: 76; }
.streets path { fill: none; stroke: #dfe0e3; stroke-width: 6; stroke-linejoin: round; }
.roads path { stroke-linejoin: round; }
.avenue, .edge, .light, .main, .loop { fill: none; }
.avenue { stroke: #d9dddf; stroke-width: 24; }
.edge { stroke: #a9acb1; }
.edge.dark { stroke: #96999e; }
.light { stroke: #cfd2d9; }
.loop { stroke: #d2d4d8; }
.main { stroke: #afb2b9; }
.edge.s24 { stroke-width: 28; }
.s24 { stroke-width: 22; }
.edge.s38 { stroke-width: 44; }
.s38 { stroke-width: 38; }
.edge.s52 { stroke-width: 62; }
.s52 { stroke-width: 54; }

.labels text { paint-order: stroke; stroke: #f8f6f0; stroke-opacity: .85; stroke-width: 9; stroke-linejoin: round; }
.district { font: 600 56px "Roboto Condensed", Roboto, sans-serif; fill: #5f6466; text-anchor: middle; }
.stadium { font: 600 47px Inter, sans-serif; fill: #2c8a45; }
.city { font: 600 101px Inter, sans-serif; fill: #3e3e3e; }
.labels .river-name { font: italic 500 47px Inter, sans-serif; fill: #5b9dd6; letter-spacing: 4px; stroke: #bfe6f5; }
.school { font: 600 47px Inter, sans-serif; fill: #7f5b4e; }
.sign { font: 700 16px "Liberation Sans", sans-serif; fill: #454545; text-anchor: middle; letter-spacing: 2px; }
.route { font: 700 52px "Liberation Sans", sans-serif; fill: #fff; text-anchor: middle; }

.address { padding: 108px 50px 68px; border-bottom: 5px solid #d5cccb; }
.address h2 { padding-left: 28px; font-size: 78px; font-weight: 600; line-height: 96px; }

.redacted {
  width: 51%;
  height: 218px;
  margin-top: 34px;
  background: radial-gradient(ellipse 76% 150% at 33% 38%, #ebe8e6 0 30%, #efeeec 60%, #f8f7f6 100%);
}

.instructions { padding: 145px 97px 172px; border-bottom: 5px solid #d6d1cf; }
.instructions h2 { color: var(--muted); font-size: 66px; font-weight: 400; line-height: 80px; letter-spacing: 10px; }
.instructions p { margin-top: 71px; font-size: 82px; font-weight: 700; line-height: 96px; }

.items {
  display: flex;
  align-items: flex-end;
  gap: 444px;
  height: 170px;
  padding-left: 388px;
}
.item-star { width: 51px; }
.item-bag { width: 97px; }

.sheet {
  position: relative;
  display: flex;
  flex: 1;
  flex-direction: column;
  align-items: center;
  padding: 33px 0 38px;
  border: 5px solid #d5d8d9;
  border-bottom: 0;
  border-radius: 110px 110px 0 0;
  background: #fefefe;
  box-shadow: 0 0 110px rgba(70, 35, 15, .26);
}

.handle { width: 136px; height: 20px; border-radius: 8px; background: #c1b2ab; }
.sheet h2 { margin-top: 61px; font-size: 96px; line-height: 112px; }
.message { margin-top: 27px; font-size: 70px; line-height: 84px; }

.steps {
  display: grid;
  grid-template-columns: 412fr 434fr 570fr 280fr;
  align-self: stretch;
  margin-top: 119px;
  padding: 0 118px 0 66px;
  list-style: none;
  isolation: isolate;
}

/* Track joining the first dot to the last one. */
.steps::before {
  content: "";
  grid-area: 1 / 1 / 2 / -1;
  height: 10px;
  margin: 62px 140px 0 206px;
  background: var(--green);
}

.step { grid-row: 1; display: flex; flex-direction: column; align-items: center; }
.step:nth-child(1) { grid-column: 1; }
.step:nth-child(2) { grid-column: 2; }
.step:nth-child(3) { grid-column: 3; }
.step:nth-child(4) { grid-column: 4; }

.dot {
  position: relative;
  width: 48px;
  height: 48px;
  margin: 43px 0;
  border-radius: 50%;
  background: var(--green);
}

.active .dot::before {
  content: "";
  position: absolute;
  z-index: -1;
  inset: -113px -113px -107px -107px;
  border-radius: 50%;
  background: #f7f8f4;
}

.last .dot { width: 134px; height: 134px; margin: 0; border: 47px solid var(--green); background: #fefefe; }

.label {
  margin-top: 39px;
  color: var(--muted);
  font-size: 66px;
  line-height: 63px;
  text-align: center;
  white-space: nowrap;
}

.active .label { color: var(--brown); font-size: 64px; font-weight: 600; }
.last .label { color: #f3f1f0; }

.home-indicator { width: 671px; height: 24px; margin-top: auto; border-radius: 12px; background: #000; }
```
